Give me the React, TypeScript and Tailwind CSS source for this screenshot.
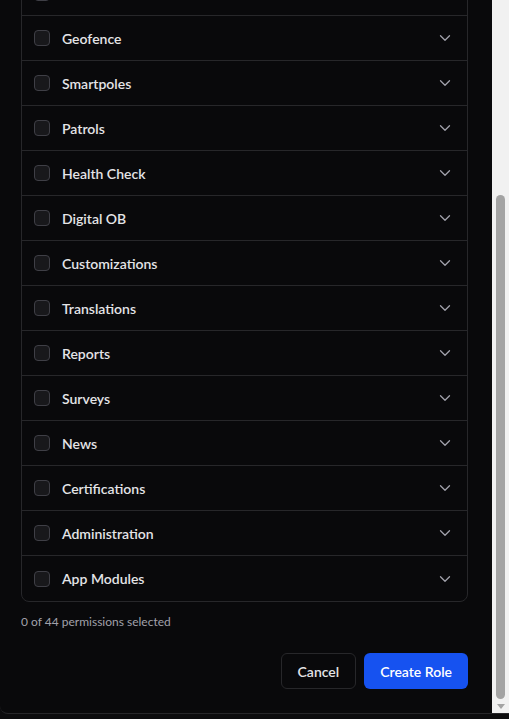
import React from "react";
import { ChevronDown } from "lucide-react";

const rows = [
  "",
  "Geofence",
  "Smartpoles",
  "Patrols",
  "Health Check",
  "Digital OB",
  "Customizations",
  "Translations",
  "Reports",
  "Surveys",
  "News",
  "Certifications",
  "Administration",
  "App Modules",
];

export default function App() {
  return (
    <div
      className="w-[509px] h-[719px] bg-[#0c0c0e] overflow-hidden"
      style={{ fontFamily: "'Segoe UI', Lato, 'Noto Sans', sans-serif" }}
    >
      <div className="h-[714px] flex bg-[#09090b] border-b border-[#27272a] rounded-bl-lg overflow-hidden">
        <div className="flex-1 overflow-hidden pl-[21px] pr-[24px]">
          <div className="mt-[-30px] border border-[#27272a] rounded-lg divide-y divide-[#27272a]">
            {rows.map((r, i) => (
              <div key={i} className="h-[45px] flex items-center pl-3 pr-[13px]">
                <div className="w-4 h-4 rounded-[4px] border border-[#3f3f46] bg-[#18181b]" />
                <span className="ml-3 text-[14px] font-semibold text-[#e4e4e7]">{r}</span>
                <ChevronDown className="ml-auto text-[#a1a1aa]" size={18} strokeWidth={1.75} />
              </div>
            ))}
          </div>
          <div className="mt-3 text-[12px] leading-4 text-[#a1a1aa]">0 of 44 permissions selected</div>
          <div className="mt-[23px] flex justify-end gap-2">
            <button className="h-9 px-4 rounded-md border border-[#27272a] bg-[#09090b] text-[14px] font-semibold text-[#e4e4e7]">
              Cancel
            </button>
            <button className="h-9 px-4 rounded-md bg-[#1652f0] text-[14px] font-semibold text-white">
              Create Role
            </button>
          </div>
        </div>
        <div className="w-[17px] bg-[#f1f1f1] flex flex-col items-center">
          <div className="flex-1 w-full flex flex-col items-center pt-[195px]">
            <div className="flex-1 w-[9px] bg-[#a3a3a3] rounded-full" />
          </div>
          <div className="h-[14px] flex items-center justify-center">
            <svg width="8" height="5" viewBox="0 0 8 5">
              <path d="M0 0 L8 0 L4 5 Z" fill="#a3a3a3" />
            </svg>
          </div>
        </div>
      </div>
    </div>
  );
}
